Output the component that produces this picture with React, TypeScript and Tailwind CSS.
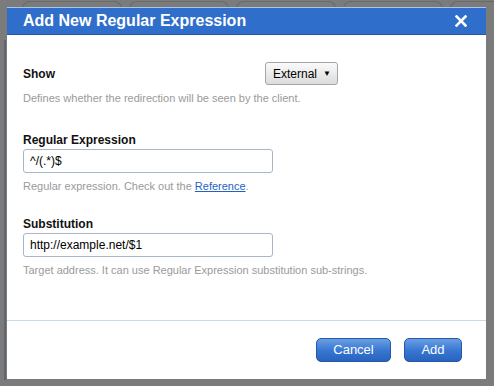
import React from "react";

export default function App() {
  const tabs = [0, 1, 2, 3, 4];
  return (
    <div
      className="relative w-[494px] h-[386px] bg-[#7b7b7b] overflow-hidden"
      style={{ fontFamily: '"Liberation Sans", Arial, sans-serif' }}
    >
      {/* background tabs behind the modal */}
      <div className="absolute left-[22px] top-[1px] flex gap-[7px]">
        {tabs.map((t) => (
          <div
            key={t}
            className="w-[100px] h-[14px] rounded-t-[8px] border border-[#6a6a6a] border-b-0"
          />
        ))}
      </div>
      <div className="absolute left-[4px] top-[40px] w-[2px] h-[340px] bg-[#5f6670]" />

      {/* modal */}
      <div className="absolute left-[7px] top-[7px] w-[479px] h-[372px] bg-white flex flex-col">
        <div className="h-[1px] bg-[#a9c3ea]" />
        <div className="h-[27px] bg-[#2f6ecb] border-b border-[#245aa8] flex items-center justify-between pl-[16px] pr-[19px]">
          <span className="text-white font-bold text-[16px] leading-none">
            Add New Regular Expression
          </span>
          <svg width="12" height="12" viewBox="0 0 12 12">
            <path d="M1.5 1.5 L10.5 10.5 M10.5 1.5 L1.5 10.5" stroke="white" strokeWidth="2.6" strokeLinecap="square" />
          </svg>
        </div>

        <div className="flex-1 px-[16px] pt-[27px]">
          <div className="flex items-center">
            <span className="w-[242px] text-[12px] font-bold text-[#111]">Show</span>
            <div className="w-[73px] h-[23px] pl-[7px] pr-[6px] flex items-center justify-between border border-[#a5a5a5] rounded-[3px] bg-gradient-to-b from-[#fafafa] to-[#dcdcdc] text-[12px] text-black">
              <span>External</span>
              <span className="text-[8px]">▼</span>
            </div>
          </div>
          <div className="mt-[5px] text-[11px] text-[#9a9a9a]">
            Defines whether the redirection will be seen by the client.
          </div>

          <div className="mt-[26px] text-[12px] leading-[14px] font-bold text-[#111]">Regular Expression</div>
          <div className="mt-[2px] w-[250px] h-[24px] border border-[#a9b6c6] rounded-[3px] flex items-center px-[6px] text-[12px] text-black">
            ^/(.*)$
          </div>
          <div className="mt-[5px] text-[11px] text-[#9a9a9a]">
            Regular expression. Check out the{" "}
            <span className="text-[#2262c6] underline">Reference</span>.
          </div>

          <div className="mt-[23px] text-[12px] leading-[14px] font-bold text-[#111]">Substitution</div>
          <div className="mt-[2px] w-[250px] h-[24px] border border-[#a9b6c6] rounded-[3px] flex items-center px-[6px] text-[12px] text-black">
            http://example.net/$1
          </div>
          <div className="mt-[5px] text-[11px] text-[#9a9a9a]">
            Target address. It can use Regular Expression substitution sub-strings.
          </div>
        </div>

        <div className="h-[1px] bg-[#c5dbef] mb-[17px]" />
        <div className="flex justify-end gap-[13px] pr-[24px] pb-[17px]">
          <div className="w-[75px] h-[24px] rounded-[5px] border border-[#2459a8] bg-gradient-to-b from-[#6a9fe3] via-[#3a78d2] to-[#2763bf] text-white text-[13px] flex items-center justify-center">
            Cancel
          </div>
          <div className="w-[58px] h-[24px] rounded-[5px] border border-[#2459a8] bg-gradient-to-b from-[#6a9fe3] via-[#3a78d2] to-[#2763bf] text-white text-[13px] flex items-center justify-center">
            Add
          </div>
        </div>
      </div>
    </div>
  );
}
